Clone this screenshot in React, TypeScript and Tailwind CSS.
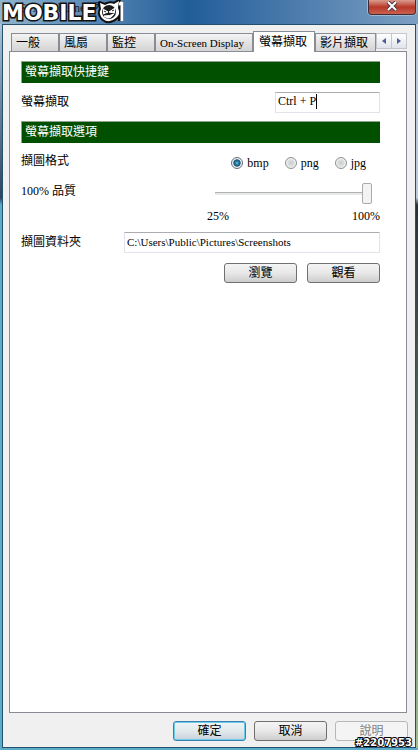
import { useState } from "react";
import type { ReactNode } from "react";

const tabs = [
  { label: "一般", width: "w-12" },
  { label: "風扇", width: "w-12" },
  { label: "監控", width: "w-12" },
  { label: "On-Screen Display", width: "w-[98px] text-[11px]" },
  { label: "螢幕擷取", width: "w-[62px]" },
  { label: "影片擷取", width: "w-[61px]" },
];
const formats = ["bmp", "png", "jpg"];

const buttonStyles = {
  normal: "border-[#707070] bg-linear-to-b from-[#f4f4f4] via-[#e8e8e8] to-[#cdcdcd] text-black",
  primary:
    "border-[#3c7fb1] bg-linear-to-b from-[#f0f4f6] via-[#e2e9ec] to-[#c8d2d8] text-black shadow-[inset_0_0_0_1px_#6ccdea]",
  disabled: "border-[#b4b8ba] bg-[#f4f4f4] text-[#838383]",
};

function SectionTitle({ children }: { children: ReactNode }) {
  return (
    <h2 className="h-[22px] border-t border-l border-[#8fa48f] bg-[#005000] pl-[3px] text-xs leading-5 text-white">
      {children}
    </h2>
  );
}

function DialogButton({ children, kind = "normal" }: { children: ReactNode; kind?: keyof typeof buttonStyles }) {
  return (
    <button
      type="button"
      disabled={kind === "disabled"}
      className={`h-5 w-[73px] rounded-[3px] border text-xs leading-4 ${buttonStyles[kind]}`}
    >
      {children}
    </button>
  );
}

function Watermark() {
  return (
    <div className="absolute top-0 left-[2px] flex h-6 items-center">
      <span className="pt-[2px] font-['DejaVu_Sans',sans-serif] text-[22px] leading-6 font-bold text-white [-webkit-text-stroke:3px_#111] [paint-order:stroke_fill]">
        MOBILE
      </span>
      <svg width="30" height="24" viewBox="0 0 30 24" fill="none">
        <path d="M20 4q3 0 4-2v19" stroke="#111" strokeWidth="6" />
        <path
          d="M3 3l5 2q5-3 9-1l5-3-1 7q3 6-2 10-7 6-13 1-5-5-2-10Z"
          fill="#fff"
          stroke="#111"
          strokeWidth="4"
          strokeLinejoin="round"
          className="[paint-order:stroke]"
        />
        <path d="M22 4q2 0 3-2v19" stroke="#fff" strokeWidth="3" />
        <ellipse cx="12" cy="12" rx="7" ry="7" fill="#1c1c1c" />
        <path d="M6 9l5 3-5 2M18 8l-6 4 6 1M7 16q6 0 10-2-3 5-7 4Z" fill="#fff" stroke="#fff" />
        <path d="M7 11l2 1M17 10l-2 1" stroke="#1c1c1c" />
      </svg>
    </div>
  );
}

export default function App() {
  const [activeTab, setActiveTab] = useState(4);
  const [hotkey, setHotkey] = useState("Ctrl + P");
  const [format, setFormat] = useState("bmp");
  const [quality, setQuality] = useState(100);
  const [folder, setFolder] = useState("C:\\Users\\Public\\Pictures\\Screenshots");

  return (
    <div className="relative flex min-h-screen flex-col bg-[#5cacc9] pb-[2px] font-['Liberation_Serif','Noto_Sans_CJK_TC',serif] text-xs text-black">
      <header className="flex h-6 shrink-0 justify-between bg-linear-to-r from-[#8fb4ce] via-[#205d99] via-45% to-[#7b9fc2] pr-[2px] pl-[9px]">
        <h1 className="leading-4 text-[#16202c]">MSI Afterburner 內容</h1>
        <Watermark />
        <button
          type="button"
          aria-label="關閉"
          className="flex h-[15px] w-12 items-center justify-center rounded-b border border-t-0 border-[#402b36] bg-linear-to-b from-[#d99b90] via-[#b83628] to-[#c9604e] pb-[3px] shadow-[0_0_0_1px_#9fb9d2]"
        >
          <svg width="12" height="10" viewBox="0 0 12 10">
            <path d="m2 1 8 8m0-8L2 9" stroke="#4a3540" strokeWidth="4" />
            <path d="m2 1 8 8m0-8L2 9" stroke="#fff" strokeWidth="2" />
          </svg>
        </button>
      </header>

      <div className="flex grow">
        <div className="w-[2px] bg-linear-to-b from-[#aac5d8] via-[#30445c] via-24% to-[#5cacc9] to-25%" />
        <main className="flex min-w-0 grow flex-col border border-[#23506e] bg-[#f0f0f0] pt-[6px] pr-2 pb-[6px] pl-[6px]">
          <div className="flex h-5 items-end pl-[2px]">
            <nav className="flex items-end">
              {tabs.map((tab, i) => (
                <button
                  key={tab.label}
                  type="button"
                  onClick={() => setActiveTab(i)}
                  className={`shrink-0 border border-b-0 border-[#898c95] text-left leading-4 whitespace-nowrap ${tab.width} ${
                    i === activeTab
                      ? "relative -mb-px h-[21px] bg-white pl-[5px]"
                      : "h-[18px] bg-linear-to-b from-[#f3f3f3] to-[#d4d4d4] pl-[4px]"
                  }`}
                >
                  {tab.label}
                </button>
              ))}
            </nav>
            <div className="mb-[2px] flex">
              <button
                type="button"
                aria-label="上一頁"
                className="flex h-4 w-4 items-center justify-center border border-[#c3c6cc] bg-linear-to-b from-white to-[#e0e4ea]"
              >
                <svg width="4" height="6" viewBox="0 0 4 6">
                  <path d="M4 0v6L0 3Z" fill="#4a5f97" />
                </svg>
              </button>
              <button
                type="button"
                aria-label="下一頁"
                className="-ml-px flex h-4 w-4 items-center justify-center border border-[#c3c6cc] bg-linear-to-b from-white to-[#e0e4ea]"
              >
                <svg width="4" height="6" viewBox="0 0 4 6">
                  <path d="M0 0v6l4-3Z" fill="#4a5f97" />
                </svg>
              </button>
            </div>
          </div>

          <section className="grow border border-[#898c95] bg-white pt-[9px] pr-[26px] pl-[11px]">
            <SectionTitle>螢幕擷取快捷鍵</SectionTitle>
            <div className="flex h-[38px] items-center justify-between">
              <label htmlFor="hotkey">螢幕擷取</label>
              <span className="flex h-[21px] w-[105px] items-center border border-[#e2e3ea] border-t-[#abadb3] pb-[2px] pl-[2px]">
                <input
                  id="hotkey"
                  value={hotkey}
                  onChange={(e) => setHotkey(e.target.value)}
                  className="field-sizing-content border-r border-black leading-3 outline-none"
                />
              </span>
            </div>

            <SectionTitle>螢幕擷取選項</SectionTitle>
            <fieldset className="flex h-[38px] items-center">
              <legend className="float-left h-[38px] grow leading-9">擷圖格式</legend>
              <div className="flex gap-4 pt-[2px] pr-[14px]">
                {formats.map((f) => (
                  <label key={f} className="flex items-center gap-1">
                    <input
                      type="radio"
                      name="format"
                      checked={format === f}
                      onChange={() => setFormat(f)}
                      className="h-3 w-3 appearance-none rounded-full border border-[#8e8f8f] bg-radial from-[#c9cdd0] to-[#f4f4f4] shadow-[inset_0_0_0_1px_#f4f4f4] checked:border-[#5d6f80] checked:from-[#55c3e8] checked:via-[#174a70] checked:via-45% checked:to-[#e4edf2] checked:to-60%"
                    />
                    {f}
                  </label>
                ))}
              </div>
            </fieldset>

            <div className="flex h-[46px] justify-between">
              <label htmlFor="quality" className="pt-[2px] leading-4">
                {quality}% 品質
              </label>
              <div className="w-[179px] pt-px">
                <input
                  id="quality"
                  type="range"
                  min={25}
                  max={100}
                  value={quality}
                  onChange={(e) => setQuality(Number(e.target.value))}
                  className="ml-[14px] block h-[22px] w-[157px] appearance-none bg-transparent [&::-webkit-slider-runnable-track]:h-[3px] [&::-webkit-slider-runnable-track]:border-t [&::-webkit-slider-runnable-track]:border-[#b0b0b0] [&::-webkit-slider-runnable-track]:bg-[#e7eaea] [&::-webkit-slider-thumb]:-mt-[10px] [&::-webkit-slider-thumb]:h-[21px] [&::-webkit-slider-thumb]:w-[10px] [&::-webkit-slider-thumb]:appearance-none [&::-webkit-slider-thumb]:rounded-[2px] [&::-webkit-slider-thumb]:border [&::-webkit-slider-thumb]:border-[#aaaaaa] [&::-webkit-slider-thumb]:bg-[#f3f3f3]"
                />
                <div className="flex justify-between pt-[2px] pl-[6px] leading-5">
                  <span>25%</span>
                  <span>100%</span>
                </div>
              </div>
            </div>

            <div className="flex items-center pt-[5px]">
              <label htmlFor="folder" className="w-[103px] shrink-0 pb-[2px]">
                擷圖資料夾
              </label>
              <input
                id="folder"
                value={folder}
                onChange={(e) => setFolder(e.target.value)}
                className="h-[21px] min-w-0 grow border border-[#e2e3ea] border-t-[#abadb3] pb-[2px] pl-[2px] text-[11px] outline-none"
              />
            </div>
            <div className="flex justify-end gap-[10px] pt-[10px]">
              <DialogButton>瀏覽</DialogButton>
              <DialogButton>觀看</DialogButton>
            </div>
          </section>

          <footer className="-mr-px flex justify-end gap-2 pt-2">
            <DialogButton kind="primary">確定</DialogButton>
            <DialogButton>取消</DialogButton>
            <DialogButton kind="disabled">說明</DialogButton>
          </footer>
        </main>
        <div className="w-[2px] bg-linear-to-b from-[#b9cbdc] from-24% via-[#26313c] via-25% to-[#9fc08c]" />
      </div>
      <p className="absolute right-[6px] bottom-px font-['DejaVu_Sans',sans-serif] text-[10px] leading-3 font-bold text-white [-webkit-text-stroke:2px_#000] [paint-order:stroke_fill]">
        #2207953
      </p>
    </div>
  );
}
